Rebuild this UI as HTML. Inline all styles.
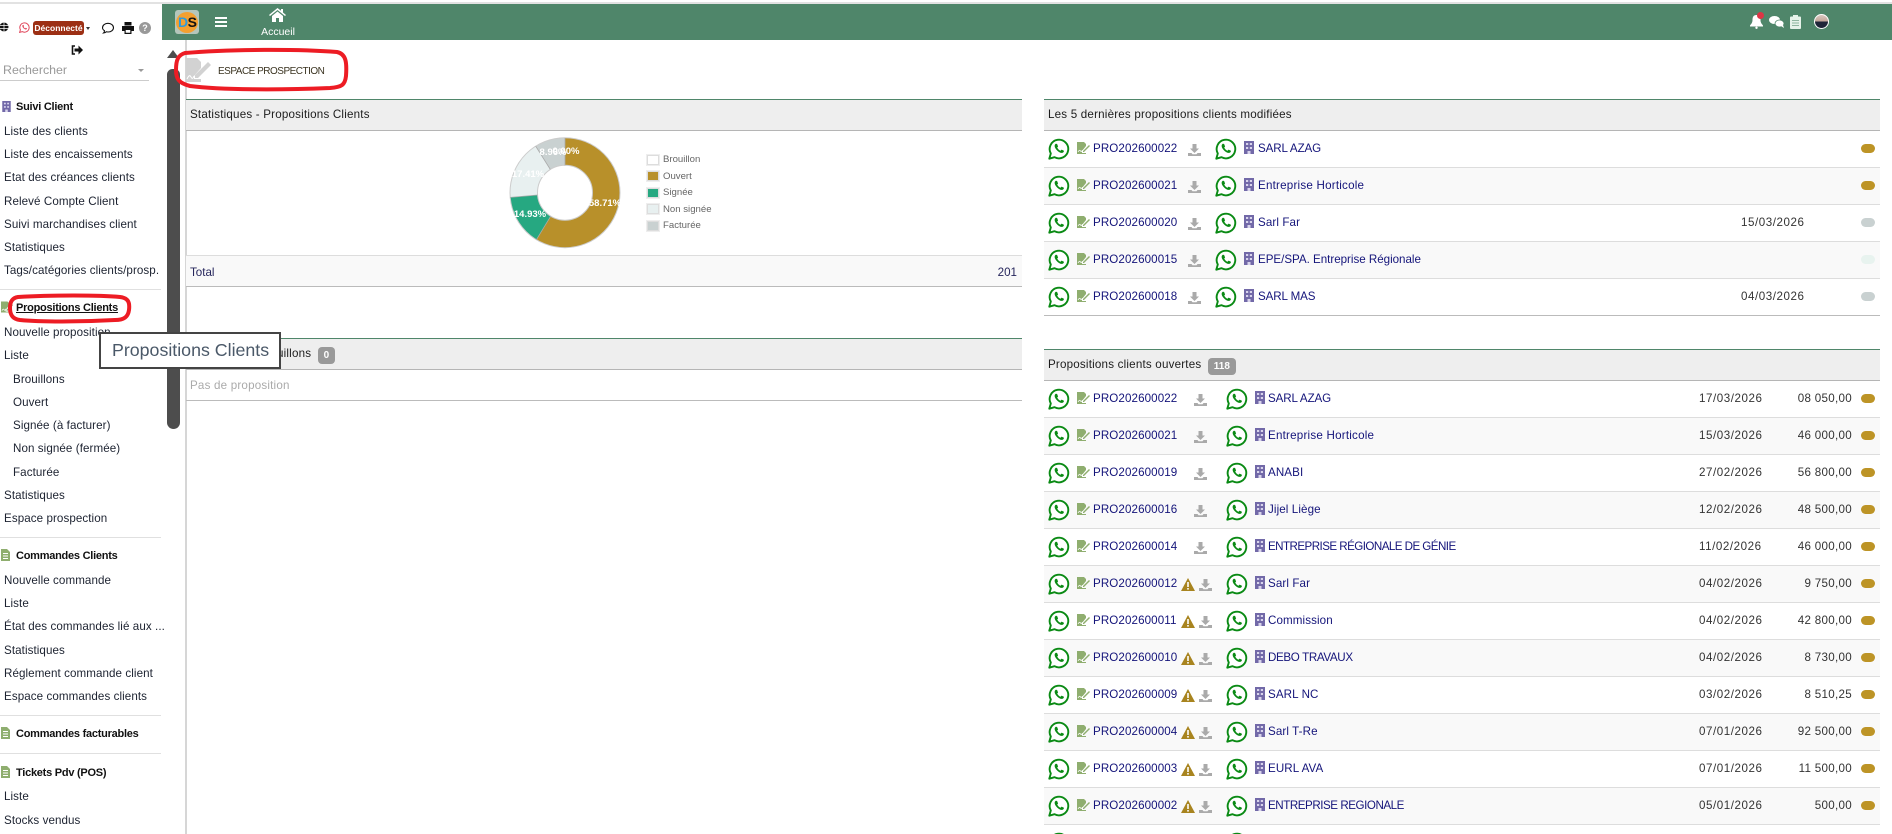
<!DOCTYPE html>
<html lang="fr"><head><meta charset="utf-8"><title>Espace prospection</title>
<style>
*{box-sizing:border-box}
html,body{margin:0;padding:0;width:1892px;height:834px;overflow:hidden;background:#fff;font-family:"Liberation Sans",sans-serif;font-size:11.6px;color:#222}
.abs,.m,.h,.hr{position:absolute}
#tl{position:absolute;left:0;top:2px;width:1892px;height:2px;background:#e2e2e2}
#top{position:absolute;left:162px;top:4px;width:1730px;height:36px;background:#4f866a}
#vl{position:absolute;left:185px;top:40px;width:2px;height:794px;background:#d6d6d6}
.m{white-space:nowrap;color:#1c2230;left:4px;line-height:14px;height:14px;margin-top:-6px;letter-spacing:.08px}
.s2{left:13px}
.h{left:16px;white-space:nowrap;font-weight:bold;font-size:11px;color:#111;line-height:14px;margin-top:-6px;letter-spacing:-.25px}
.hr{left:0;width:161px;height:1px;background:#e0e0e0}
.panel{position:absolute;border-top:1px solid #4f866a}
.ph{height:31px;background:#eee;border-bottom:1px solid #b5b5b5;line-height:30px;padding-left:4px;color:#1c1c1c;white-space:nowrap;letter-spacing:.2px}
.badge{display:inline-block;background:#999;color:#fff;font-weight:bold;font-size:10px;border-radius:4px;line-height:17px;height:17px;padding:0 6px;vertical-align:-1px;margin-left:3px;letter-spacing:0}
.r{position:relative;height:37px;border-bottom:1px solid #ddd;line-height:35px;white-space:nowrap}
.r:nth-child(even){background:#f9f9f9}
.r>*{position:absolute}
.r a{color:#14147a;text-decoration:none;letter-spacing:.1px}
.wa{left:4px;top:7px;width:22px;height:22px}
.p{left:33px;top:11px;width:13px;height:12px}
.n{left:49px}
.dl{top:13px;width:13px;height:12px}
.wn{left:137px;top:12px;width:14px;height:13px}
.b{top:10px;width:10px;height:13px}
.dt{color:#333;letter-spacing:.55px}
.am{right:28px;color:#333;letter-spacing:.3px}
.st{left:817px;top:13px;width:14px;height:9px;border-radius:5px;background:#bd9426}
.t1 .dl{left:144px}.t1 .w2{left:171px}.t1 .b{left:200px}.t1 .c{left:214px}.t1 .dt{left:697px}
.t2 .dl{left:150px}.t2 .dl.x{left:155px}.t2 .w2{left:182px}.t2 .b{left:211px}.t2 .c{left:224px}.t2 .dt{left:655px}
.lg{position:absolute;left:647px;width:12px;height:10px;border:1px solid #ddd;outline:1px solid #eee}
.ll{position:absolute;left:663px;font-size:9.6px;color:#666;line-height:12px;white-space:nowrap}
</style></head><body>
<svg width="0" height="0" style="position:absolute">
<symbol id="w" viewBox="0 0 22 22"><path d="M1.300 20.700l1.500-5.200A9.300 9.300 0 1 1 6.500 19.200z" fill="#fff" stroke="#0a8a14" stroke-width="1.900" stroke-linejoin="round"/><path d="M7.600 5.900c-.7.500-1.100 1.400-.9 2.600.4 2.200 3 5.200 5.800 6.200 1.300.4 2.200.2 2.900-.5.400-.4.600-1.100.5-1.500l-2.300-1.100-1.100 1.200c-1.400-.6-2.700-1.900-3.300-3.300l.9-1-1-2.500c-.5-.3-1.200-.4-1.500-.1z" fill="#0a8a14"/></symbol>
<symbol id="p" viewBox="0 0 13 12"><path d="M0 0h7l2 2v2L5 9v2h4v1H0z" fill="#8fae6f"/><path d="M6 9l6-6 1 1-6 6H6z" fill="#8fae6f"/><path d="M1 10c1-2 2-2 2.500-1s1 1 2-1" stroke="#fff" fill="none" stroke-width=".8"/></symbol>
<symbol id="d" viewBox="0 0 13 12"><path d="M4.500 0h4v4.500h2.500L6.500 9 2 4.500h2.500z" fill="#aaa"/><path d="M0 9h3.500l1 1.200h4l1-1.200H13v3H0z" fill="#aaa"/></symbol>
<symbol id="t" viewBox="0 0 14 13"><path d="M7 0l7 13H0z" fill="#a8841f"/><rect x="6.200" y="4" width="1.600" height="5" fill="#fff"/><rect x="6.200" y="10" width="1.600" height="1.600" fill="#fff"/></symbol>
<symbol id="b" viewBox="0 0 10 13"><rect width="10" height="13" fill="#7269a8"/><path d="M2 2h2.200v2H2zM5.800 2H8v2H5.800zM2 6h2.200v2H2zM5.800 6H8v2H5.800zM3.500 10h3v3h-3z" fill="#d8d4ec"/></symbol>
<symbol id="f" viewBox="0 0 9 12"><path d="M0 0h6l3 3v9H0z" fill="#8fae6f"/><path d="M2 4.500h5M2 7h5M2 9.500h5" stroke="#fff" stroke-width="1"/></symbol>
</svg>
<div id="tl"></div><div id="top"></div><div id="vl"></div>

<!-- Top bar -->
<div class="abs" style="left:175px;top:10px;width:24px;height:24px;border-radius:3px;background:#b4c6bb"></div>
<div class="abs" style="left:176px;top:12px;width:22px;height:21px;border-radius:50%;background:#f4a030"></div>
<div class="abs" style="left:178px;top:14px;font:bold 14px/17px 'Liberation Sans',sans-serif;letter-spacing:-.5px;color:#111;white-space:nowrap"><span style="color:#2f9bdc">D</span>S</div>
<div class="abs" style="left:215px;top:17px;width:12px;height:2px;background:#fff;box-shadow:0 4px #fff,0 8px #fff"></div>
<svg class="abs" style="left:269px;top:8px" width="17" height="14" viewBox="0 0 17 14"><path d="M8.500 0L0 7l1 1 7.500-6 7.500 6 1-1-3-2.500V1h-2v1.800z" fill="#fff"/><path d="M3 8l5.500-4.500L14 8v6h-4v-4H7v4H3z" fill="#fff"/></svg>
<div class="abs" style="left:256px;top:26px;width:44px;text-align:center;color:#fff;font-size:10.500px;line-height:13px">Accueil</div>
<svg class="abs" style="left:1750px;top:15px" width="13" height="14" viewBox="0 0 13 14"><path d="M6.500 0c-3 0-4 2-4 5 0 3-1.500 4-2.500 5.500v1h13v-1C12 9 10.500 8 10.500 5c0-3-1-5-4-5z" fill="#fff"/><circle cx="6.500" cy="12.800" r="1.200" fill="#fff"/></svg>
<div class="abs" style="left:1757px;top:12px;width:7px;height:7px;border-radius:50%;background:#dc3545"></div>
<svg class="abs" style="left:1769px;top:16px" width="15" height="12" viewBox="0 0 15 12"><ellipse cx="5.500" cy="4" rx="5.500" ry="4" fill="#fff"/><ellipse cx="10.500" cy="7.500" rx="4.500" ry="3.500" fill="#fff" stroke="#4f866a" stroke-width=".8"/><path d="M12 10l3 2-1-3z" fill="#fff"/></svg>
<svg class="abs" style="left:1790px;top:15px" width="11" height="14" viewBox="0 0 11 14"><rect y="1.500" width="11" height="12.500" rx="1" fill="#e6f2e9"/><rect x="3" width="5" height="3" fill="#e6f2e9"/><path d="M2 5.500h7M2 8h7M2 10.500h7" stroke="#8fb59f" stroke-width="1"/></svg>
<div class="abs" style="left:1814px;top:14px;width:15px;height:15px;border-radius:50%;background:linear-gradient(#d9c8c0 0,#c4a89c 45%,#1e2538 55%,#1e2538 100%);border:1px solid #fff"></div>

<!-- Sidebar top -->
<svg class="abs" style="left:0;top:22px" width="9" height="10" viewBox="0 0 9 10"><circle cx="4" cy="5" r="4.500" fill="#111"/><path d="M-1 3.500h10M-1 6.500h10M4 0v10" stroke="#fff" stroke-width=".7"/></svg>
<svg class="abs" style="left:19px;top:22px" width="11" height="11" viewBox="0 0 22 22"><path d="M1.300 20.700l1.500-5.200A9.300 9.300 0 1 1 6.500 19.200z" fill="#fff" stroke="#e0455a" stroke-width="2"/><path d="M7.600 5.900c-.7.500-1.100 1.400-.9 2.600.4 2.200 3 5.200 5.800 6.200 1.300.4 2.200.2 2.900-.5.400-.4.600-1.100.5-1.500l-2.300-1.100-1.100 1.200c-1.400-.6-2.700-1.900-3.300-3.300l.9-1-1-2.500c-.5-.3-1.200-.4-1.500-.1z" fill="#e0455a"/></svg>
<div class="abs" style="left:33px;top:21px;width:51px;height:14px;background:#9c2f14;border-radius:3px;color:#fff;font-weight:bold;font-size:8.500px;line-height:14px;text-align:center">Déconnecté</div>
<div class="abs" style="left:86px;top:27px;border:2.500px solid transparent;border-top:3px solid #333;border-bottom:0;width:0;height:0"></div>
<svg class="abs" style="left:102px;top:22px" width="12" height="12" viewBox="0 0 12 12"><path d="M1.500 11c.8-.8 1-1.500 1-2.300C1.200 7.900.5 6.900.5 5.700.5 3.200 3 1.300 6 1.300s5.500 1.900 5.500 4.400S9 10 6 10c-.6 0-1.200 0-1.700-.2-.7.600-1.700 1.100-2.800 1.200z" fill="none" stroke="#111" stroke-width="1.100"/></svg>
<svg class="abs" style="left:122px;top:22px" width="12" height="12" viewBox="0 0 12 12"><path d="M2.500 0h7v3.500h-7zM0 4h12v5h-2.500v3h-7V9H0zM3.700 8v2.800h4.600V8z" fill="#111"/></svg>
<div class="abs" style="left:139px;top:22px;width:12px;height:12px;border-radius:50%;background:#999;color:#fff;font-weight:bold;font-size:9px;line-height:12px;text-align:center">?</div>
<svg class="abs" style="left:71px;top:45px" width="12" height="10" viewBox="0 0 12 10"><path d="M4 1H1.500v8H4" fill="none" stroke="#111" stroke-width="1.600"/><path d="M3.500 3.500h4V.5L12 5 7.500 9.500v-3h-4z" fill="#111"/></svg>
<div class="abs" style="left:3px;top:62px;font-size:12.400px;line-height:16px;color:#999">Rechercher</div>
<div class="abs" style="left:138px;top:69px;border:3px solid transparent;border-top:3px solid #999;border-bottom:0;width:0;height:0"></div>
<div class="abs" style="left:0;top:80px;width:149px;height:1px;background:#ccc"></div>

<!-- Sidebar menu -->
<svg class="abs" style="left:2px;top:101px" width="9" height="11"><use href="#b"/></svg>
<div class="h" style="top:106px">Suivi Client</div>
<div class="m" style="top:131px">Liste des clients</div>
<div class="m" style="top:154px">Liste des encaissements</div>
<div class="m" style="top:177px">Etat des créances clients</div>
<div class="m" style="top:201px">Relevé Compte Client</div>
<div class="m" style="top:224px">Suivi marchandises client</div>
<div class="m" style="top:247px">Statistiques</div>
<div class="m" style="top:270px">Tags/catégories clients/prosp.</div>
<div class="hr" style="top:289px"></div>
<svg class="abs" style="left:1px;top:301px" width="12" height="12"><use href="#p"/></svg>
<div class="h" style="top:307px;text-decoration:underline">Propositions Clients</div>
<div class="m" style="top:332px">Nouvelle proposition</div>
<div class="m" style="top:355px">Liste</div>
<div class="m s2" style="top:379px">Brouillons</div>
<div class="m s2" style="top:402px">Ouvert</div>
<div class="m s2" style="top:425px">Signée (à facturer)</div>
<div class="m s2" style="top:448px">Non signée (fermée)</div>
<div class="m s2" style="top:472px">Facturée</div>
<div class="m" style="top:495px">Statistiques</div>
<div class="m" style="top:518px">Espace prospection</div>
<div class="hr" style="top:537px"></div>
<svg class="abs" style="left:1px;top:549px" width="9" height="12"><use href="#f"/></svg>
<div class="h" style="top:555px">Commandes Clients</div>
<div class="m" style="top:580px">Nouvelle commande</div>
<div class="m" style="top:603px">Liste</div>
<div class="m" style="top:626px">État des commandes lié aux ...</div>
<div class="m" style="top:650px">Statistiques</div>
<div class="m" style="top:673px">Réglement commande client</div>
<div class="m" style="top:696px">Espace commandes clients</div>
<div class="hr" style="top:715px"></div>
<svg class="abs" style="left:1px;top:727px" width="9" height="12"><use href="#f"/></svg>
<div class="h" style="top:733px">Commandes facturables</div>
<div class="hr" style="top:753px"></div>
<svg class="abs" style="left:1px;top:766px" width="9" height="12"><use href="#f"/></svg>
<div class="h" style="top:772px">Tickets Pdv (POS)</div>
<div class="m" style="top:796px">Liste</div>
<div class="m" style="top:820px">Stocks vendus</div>

<!-- Scrollbar -->
<div class="abs" style="left:167px;top:69px;width:13px;height:360px;background:#4d4d4d;border-radius:6px 6px 7px 7px"></div>
<div class="abs" style="left:167px;top:50px;border:6px solid transparent;border-bottom:8px solid #4d4d4d;border-top:0;width:0;height:0"></div>

<!-- Page title -->
<svg class="abs" style="left:186px;top:58px" width="26" height="24" viewBox="0 0 26 24"><path d="M0 0h11l4 4v6l-7 8v3h7v3H0z" fill="#d2d2d2"/><path d="M9 17L22 4l3 3-13 13H9z" fill="#d2d2d2"/><path d="M1 21c2-4 3-4 4-2s2 2 3-1" fill="none" stroke="#fff" stroke-width="1"/></svg>
<div class="abs" style="left:218px;top:65px;font-size:10px;letter-spacing:-.5px;line-height:14px;color:#3a3320;white-space:nowrap">ESPACE PROSPECTION</div>

<!-- Left panels -->
<div class="panel" style="left:186px;top:99px;width:836px">
 <div class="ph">Statistiques - Propositions Clients</div>
</div>
<div class="abs" style="left:186px;top:255px;width:836px;height:32px;background:#f9f9f9;border-top:1px solid #ddd;border-bottom:1px solid #bbb;line-height:33px;padding:0 5px 0 4px;color:#26265c">Total<span style="float:right">201</span></div>
<svg class="abs" style="left:186px;top:130px" width="500" height="125" viewBox="186 130 500 125">
 <g fill="none" stroke-width="27.500" transform="rotate(-90 565 192.700)">
  <circle cx="565" cy="192.700" r="41.250" stroke="#b8902a" pathLength="100" stroke-dasharray="58.71 41.29"/>
  <circle cx="565" cy="192.700" r="41.250" stroke="#26a881" pathLength="100" stroke-dasharray="14.93 85.07" stroke-dashoffset="-58.71"/>
  <circle cx="565" cy="192.700" r="41.250" stroke="#e8f0f0" pathLength="100" stroke-dasharray="17.41 82.59" stroke-dashoffset="-73.64"/>
  <circle cx="565" cy="192.700" r="41.250" stroke="#c9d1d1" pathLength="100" stroke-dasharray="8.95 91.05" stroke-dashoffset="-91.05"/>
 </g>
 <circle cx="565" cy="192.700" r="55" fill="none" stroke="#ccc" stroke-width="1"/>
 <circle cx="565" cy="192.700" r="27.500" fill="#fff" stroke="#ccc" stroke-width="1"/>
 <path d="M565 138v27.500M537.600 195L510.200 197.400M550.300 169.400L535.700 146.200M550.700 216.200L536.400 239.700" stroke="#aaa" stroke-width=".8"/>
 <g fill="#fff" font-family="'Liberation Sans',sans-serif" font-size="9.500" font-weight="bold" text-anchor="middle">
  <text x="605" y="206">58.71%</text><text x="530" y="217">14.93%</text><text x="528" y="177">17.41%</text><text x="553" y="155">8.96%</text><text x="566" y="154">0.00%</text>
 </g>
</svg>
<div class="lg" style="top:155px;background:#fff"></div><div class="ll" style="top:154px">Brouillon</div>
<div class="lg" style="top:171px;background:#b8902a"></div><div class="ll" style="top:171px">Ouvert</div>
<div class="lg" style="top:188px;background:#26a881"></div><div class="ll" style="top:187px">Signée</div>
<div class="lg" style="top:204px;background:#e8f0f0"></div><div class="ll" style="top:204px">Non signée</div>
<div class="lg" style="top:221px;background:#c9d1d1"></div><div class="ll" style="top:220px">Facturée</div>

<div class="panel" style="left:186px;top:338px;width:836px">
 <div class="ph">Propositions brouillons <span class="badge">0</span></div>
 <div style="height:31px;border-bottom:1px solid #bbb;line-height:32px;padding-left:4px;color:#aaa;letter-spacing:.2px">Pas de proposition</div>
</div>

<!-- Right panel 1 -->
<div class="panel t1" style="left:1044px;top:99px;width:836px">
 <div class="ph">Les 5 dernières propositions clients modifiées</div>
 <div>
 <div class="r"><svg class="wa"><use href="#w"/></svg><svg class="p"><use href="#p"/></svg><a class="n">PRO202600022</a><svg class="dl"><use href="#d"/></svg><svg class="wa w2"><use href="#w"/></svg><svg class="b"><use href="#b"/></svg><a class="c" style="letter-spacing:-.1px">SARL AZAG</a><i class="st"></i></div>
 <div class="r"><svg class="wa"><use href="#w"/></svg><svg class="p"><use href="#p"/></svg><a class="n">PRO202600021</a><svg class="dl"><use href="#d"/></svg><svg class="wa w2"><use href="#w"/></svg><svg class="b"><use href="#b"/></svg><a class="c" style="letter-spacing:.22px">Entreprise Horticole</a><i class="st"></i></div>
 <div class="r"><svg class="wa"><use href="#w"/></svg><svg class="p"><use href="#p"/></svg><a class="n">PRO202600020</a><svg class="dl"><use href="#d"/></svg><svg class="wa w2"><use href="#w"/></svg><svg class="b"><use href="#b"/></svg><a class="c">Sarl Far</a><span class="dt">15/03/2026</span><i class="st" style="background:#c9d1d1"></i></div>
 <div class="r"><svg class="wa"><use href="#w"/></svg><svg class="p"><use href="#p"/></svg><a class="n">PRO202600015</a><svg class="dl"><use href="#d"/></svg><svg class="wa w2"><use href="#w"/></svg><svg class="b"><use href="#b"/></svg><a class="c" style="letter-spacing:-.02px">EPE/SPA. Entreprise Régionale</a><i class="st" style="background:#e8f3ef"></i></div>
 <div class="r" style="border-bottom-color:#bbb"><svg class="wa"><use href="#w"/></svg><svg class="p"><use href="#p"/></svg><a class="n">PRO202600018</a><svg class="dl"><use href="#d"/></svg><svg class="wa w2"><use href="#w"/></svg><svg class="b"><use href="#b"/></svg><a class="c" style="letter-spacing:-.1px">SARL MAS</a><span class="dt">04/03/2026</span><i class="st" style="background:#c9d1d1"></i></div>
 </div>
</div>

<!-- Right panel 2 -->
<div class="panel t2" style="left:1044px;top:349px;width:836px;height:485px;overflow:hidden">
 <div class="ph">Propositions clients ouvertes <span class="badge">118</span></div>
 <div>
 <div class="r"><svg class="wa"><use href="#w"/></svg><svg class="p"><use href="#p"/></svg><a class="n">PRO202600022</a><svg class="dl"><use href="#d"/></svg><svg class="wa w2"><use href="#w"/></svg><svg class="b"><use href="#b"/></svg><a class="c" style="letter-spacing:-.1px">SARL AZAG</a><span class="dt">17/03/2026</span><span class="am">08 050,00</span><i class="st"></i></div>
 <div class="r"><svg class="wa"><use href="#w"/></svg><svg class="p"><use href="#p"/></svg><a class="n">PRO202600021</a><svg class="dl"><use href="#d"/></svg><svg class="wa w2"><use href="#w"/></svg><svg class="b"><use href="#b"/></svg><a class="c" style="letter-spacing:.22px">Entreprise Horticole</a><span class="dt">15/03/2026</span><span class="am">46 000,00</span><i class="st"></i></div>
 <div class="r"><svg class="wa"><use href="#w"/></svg><svg class="p"><use href="#p"/></svg><a class="n">PRO202600019</a><svg class="dl"><use href="#d"/></svg><svg class="wa w2"><use href="#w"/></svg><svg class="b"><use href="#b"/></svg><a class="c">ANABI</a><span class="dt">27/02/2026</span><span class="am">56 800,00</span><i class="st"></i></div>
 <div class="r"><svg class="wa"><use href="#w"/></svg><svg class="p"><use href="#p"/></svg><a class="n">PRO202600016</a><svg class="dl"><use href="#d"/></svg><svg class="wa w2"><use href="#w"/></svg><svg class="b"><use href="#b"/></svg><a class="c">Jijel Liège</a><span class="dt">12/02/2026</span><span class="am">48 500,00</span><i class="st"></i></div>
 <div class="r"><svg class="wa"><use href="#w"/></svg><svg class="p"><use href="#p"/></svg><a class="n">PRO202600014</a><svg class="dl"><use href="#d"/></svg><svg class="wa w2"><use href="#w"/></svg><svg class="b"><use href="#b"/></svg><a class="c" style="letter-spacing:-.55px">ENTREPRISE RÉGIONALE DE GÉNIE</a><span class="dt">11/02/2026</span><span class="am">46 000,00</span><i class="st"></i></div>
 <div class="r"><svg class="wa"><use href="#w"/></svg><svg class="p"><use href="#p"/></svg><a class="n">PRO202600012</a><svg class="wn"><use href="#t"/></svg><svg class="dl x"><use href="#d"/></svg><svg class="wa w2"><use href="#w"/></svg><svg class="b"><use href="#b"/></svg><a class="c">Sarl Far</a><span class="dt">04/02/2026</span><span class="am">9 750,00</span><i class="st"></i></div>
 <div class="r"><svg class="wa"><use href="#w"/></svg><svg class="p"><use href="#p"/></svg><a class="n">PRO202600011</a><svg class="wn"><use href="#t"/></svg><svg class="dl x"><use href="#d"/></svg><svg class="wa w2"><use href="#w"/></svg><svg class="b"><use href="#b"/></svg><a class="c">Commission</a><span class="dt">04/02/2026</span><span class="am">42 800,00</span><i class="st"></i></div>
 <div class="r"><svg class="wa"><use href="#w"/></svg><svg class="p"><use href="#p"/></svg><a class="n">PRO202600010</a><svg class="wn"><use href="#t"/></svg><svg class="dl x"><use href="#d"/></svg><svg class="wa w2"><use href="#w"/></svg><svg class="b"><use href="#b"/></svg><a class="c" style="letter-spacing:-.35px">DEBO TRAVAUX</a><span class="dt">04/02/2026</span><span class="am">8 730,00</span><i class="st"></i></div>
 <div class="r"><svg class="wa"><use href="#w"/></svg><svg class="p"><use href="#p"/></svg><a class="n">PRO202600009</a><svg class="wn"><use href="#t"/></svg><svg class="dl x"><use href="#d"/></svg><svg class="wa w2"><use href="#w"/></svg><svg class="b"><use href="#b"/></svg><a class="c">SARL NC</a><span class="dt">03/02/2026</span><span class="am">8 510,25</span><i class="st"></i></div>
 <div class="r"><svg class="wa"><use href="#w"/></svg><svg class="p"><use href="#p"/></svg><a class="n">PRO202600004</a><svg class="wn"><use href="#t"/></svg><svg class="dl x"><use href="#d"/></svg><svg class="wa w2"><use href="#w"/></svg><svg class="b"><use href="#b"/></svg><a class="c">Sarl T-Re</a><span class="dt">07/01/2026</span><span class="am">92 500,00</span><i class="st"></i></div>
 <div class="r"><svg class="wa"><use href="#w"/></svg><svg class="p"><use href="#p"/></svg><a class="n">PRO202600003</a><svg class="wn"><use href="#t"/></svg><svg class="dl x"><use href="#d"/></svg><svg class="wa w2"><use href="#w"/></svg><svg class="b"><use href="#b"/></svg><a class="c">EURL AVA</a><span class="dt">07/01/2026</span><span class="am">11 500,00</span><i class="st"></i></div>
 <div class="r"><svg class="wa"><use href="#w"/></svg><svg class="p"><use href="#p"/></svg><a class="n">PRO202600002</a><svg class="wn"><use href="#t"/></svg><svg class="dl x"><use href="#d"/></svg><svg class="wa w2"><use href="#w"/></svg><svg class="b"><use href="#b"/></svg><a class="c" style="letter-spacing:-.45px">ENTREPRISE REGIONALE</a><span class="dt">05/01/2026</span><span class="am">500,00</span><i class="st"></i></div>
 <div class="r"><svg class="wa"><use href="#w"/></svg><svg class="wa w2"><use href="#w"/></svg></div>
 </div>
</div>

<!-- Tooltip -->
<div class="abs" style="left:99px;top:332px;width:182px;height:37px;background:#fff;border:2px solid #444;font-size:17.800px;line-height:33px;padding-left:11px;color:#4a5868;white-space:nowrap">Propositions Clients</div>

<!-- Red annotations -->
<svg class="abs" style="left:0;top:0;pointer-events:none" width="400" height="340" viewBox="0 0 400 340">
 <path d="M185 53C230 49 300 49 337 52C346 54 347 62 346 76C345 85 342 87 330 88C280 90 220 90 190 86C178 83 176 78 176 70C176 60 178 55 185 53Z" fill="none" stroke="#ed1c24" stroke-width="4"/>
 <path d="M18 297C50 295 100 295 120 297C128 298 130 302 129 310C128 317 124 320 115 320C80 322 40 322 20 320C12 319 10 314 10 308C10 302 12 298 18 297Z" fill="none" stroke="#ed1c24" stroke-width="4"/>
</svg>
</body></html>
